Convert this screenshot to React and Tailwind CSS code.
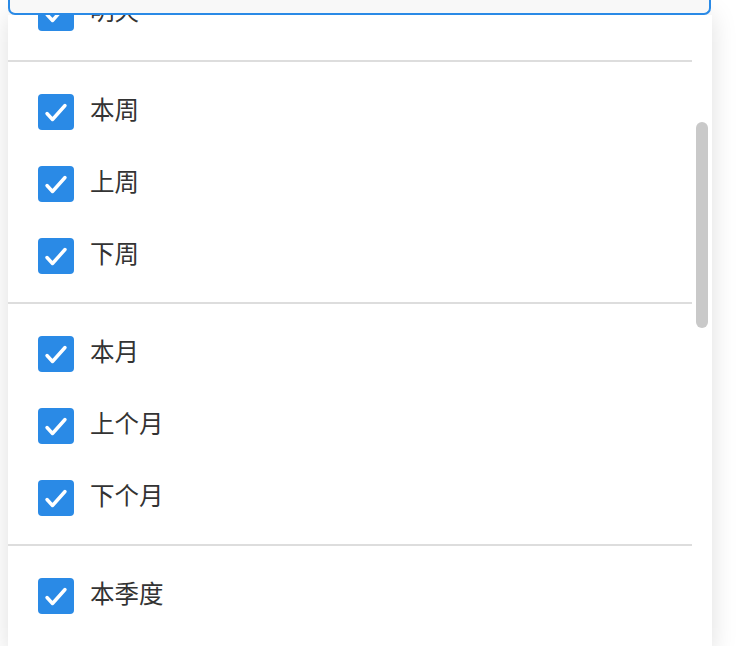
import React from 'react';

const groups = [
  ['明天'],
  ['本周', '上周', '下周'],
  ['本月', '上个月', '下个月'],
  ['本季度', '上季度'],
];

function CheckIcon() {
  return (
    <svg width="36" height="36" viewBox="0 0 36 36" fill="none">
      <path d="M9 19.5l5.5 6L27 11.5" stroke="#fff" strokeWidth="3.4" strokeLinecap="round" strokeLinejoin="round" />
    </svg>
  );
}

function Option({ label }) {
  return (
    <div className="flex items-center h-[72px] pl-[30px] gap-4">
      <span className="w-9 h-9 rounded-[4px] bg-[#2a8ae6] flex items-center justify-center shrink-0">
        <CheckIcon />
      </span>
      <span className="text-[24.5px] text-[#333] leading-none mb-[6px]">{label}</span>
    </div>
  );
}

export default function App() {
  return (
    <div
      className="w-[750px] h-[646px] bg-white overflow-hidden relative"
      style={{ fontFamily: '"Noto Sans CJK SC", "Noto Sans", sans-serif' }}
    >
      {/* top of the select box */}
      <div className="ml-2 w-[703px] h-[15px] border-2 border-t-0 border-[#2a8ae6] rounded-b-[7px] bg-[#f8f8f8] relative z-10" />

      {/* dropdown panel */}
      <div className="ml-2 w-[704px] h-[640px] bg-white shadow-[0_0_24px_rgba(0,0,0,0.13)] relative overflow-hidden">
        <div className="w-[684px] -mt-[38px]">
          {groups.map((g, i) => (
            <div key={i}>
              {i > 0 && <div className="h-[2px] bg-[#dddddd]" />}
              <div className={i === 0 ? 'pb-[11px]' : 'pt-[14px] pb-[10px]'}>
                {g.map((label) => (
                  <Option key={label} label={label} />
                ))}
              </div>
            </div>
          ))}
        </div>
        {/* scrollbar */}
        <div className="absolute left-[688px] top-[107px] w-3 h-[206px] rounded-full bg-[#c9c9c9]" />
      </div>
    </div>
  );
}
